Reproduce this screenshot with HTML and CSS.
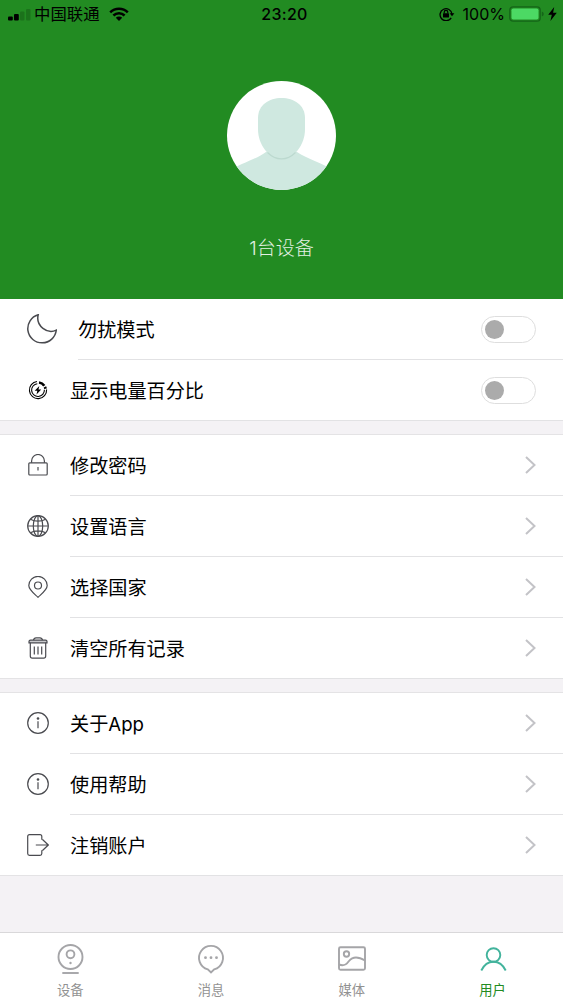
FILE: index.html
```
<!DOCTYPE html>
<html lang="zh-CN">
<head>
    <meta charset="UTF-8">
    <meta name="viewport" content="width=device-width, initial-scale=1.0">
    <title>用户</title>
    <link rel="stylesheet" href="styles.css">
</head>
<body>
    <div class="header">
        <div class="status-bar">
            <div class="status-left">
                <svg class="signal" width="23" height="12" viewBox="0 0 23 12">
                    <rect x="0" y="7.500" width="4.800" height="4" rx="1"/>
                    <rect x="6" y="5" width="4.800" height="6.500" rx="1"/>
                    <rect x="12" y="2.500" width="4.500" height="9" rx="1" opacity=".18"/>
                    <rect x="18" y="0" width="4.500" height="11.500" rx="1" opacity=".18"/>
                </svg>
                <span class="carrier">中国联通</span>
                <svg class="wifi" width="20" height="14" viewBox="0 0 20 14">
                    <path d="M1.2 5.3a12.500 12.500 0 0 1 17.600 0M4.400 8.500a8 8 0 0 1 11.200 0" fill="none" stroke="#000" stroke-width="2.500"/>
                    <path d="M10 14l-3.200-3.200a4.600 4.600 0 0 1 6.400 0z"/>
                </svg>
            </div>
            <div class="status-time">23:20</div>
            <div class="status-right">
                <svg width="16" height="14" viewBox="0 0 16 14">
                    <path d="M12.200 10.800A6 6 0 1 1 13 7" fill="none" stroke="#000" stroke-width="1.300"/>
                    <path d="M10.600 6.200h4.800L13 9.200z"/>
                    <rect x="4" y="6.300" width="6" height="4.200" rx=".6"/>
                    <path d="M5.200 6.500V5.200a1.800 1.800 0 0 1 3.600 0v1.300" fill="none" stroke="#000" stroke-width="1.200"/>
                </svg>
                <span class="percent">100%</span>
                <svg class="battery" width="35" height="16" viewBox="0 0 35 16">
                    <rect x=".8" y=".8" width="30.400" height="14.400" rx="3.200" fill="none" stroke="#156519" stroke-width="1.300"/>
                    <rect x="2.500" y="2.500" width="27" height="11" rx="1.800" fill="#4cd964"/>
                    <path d="M32.800 5.500q2 .8 2 2.500t-2 2.500z" fill="#156519"/>
                </svg>
                <svg class="bolt" width="9" height="14" viewBox="0 0 9 14">
                    <path d="M6.200 0L.2 7.800h3.600L2.400 14l6.400-8.200H5.100z"/>
                </svg>
            </div>
        </div>
        <svg class="avatar" width="109" height="109" viewBox="0 0 109 109">
            <clipPath id="circle"><circle cx="54.5" cy="54.5" r="54.5"/></clipPath>
            <g clip-path="url(#circle)">
                <rect width="109" height="109" fill="#fff"/>
                <path d="M0 91C14 82 30 78 39 71h31c10 7 26 11 39 20v20H0z" fill="#cfe8e0"/>
                <path d="M31 37C31 24 42 17 54.500 17S78 24 78 37v11c0 16-11 30-23.500 30S31 64 31 48z" fill="#cfe8e0"/>
                <path d="M40.500 71.500c8.500 8.500 19.500 8.500 28 0" fill="none" stroke="#bcd9cf" stroke-width="1.200"/>
            </g>
        </svg>
        <div class="device-count">1台设备</div>
    </div>

    <div class="group">
        <div class="row row-wide">
            <svg class="icon" width="30" height="30" viewBox="0 0 30 30">
                <path d="M11.200 .8A14.300 14.300 0 1 0 29.300 16.100C20.500 20.500 8.500 12 11.200 .8z" stroke-width="1.500"/>
            </svg>
            <div class="cell"><span>勿扰模式</span><div class="switch"></div></div>
        </div>
        <div class="row">
            <svg class="icon icon-black" width="22" height="22" viewBox="0 0 22 22">
                <path d="M10 2.500A8.600 8.600 0 1 0 19.600 10.500M10.300 4.700A6.400 6.400 0 1 0 17.400 10.800" stroke-width="1.100"/>
                <path d="M12 3.500a7.700 7.700 0 0 1 5.300 3.200M17.900 7.900a7 7 0 0 1 .6 1.900" stroke-width="2.700"/>
                <path d="M12.300 7l-4.600 4.700h2.600l-.8 3.700 4.700-5h-2.700z" fill="#000" stroke="none"/>
            </svg>
            <div class="cell"><span>显示电量百分比</span><div class="switch"></div></div>
        </div>
    </div>

    <div class="group">
        <div class="row">
            <svg class="icon" width="22" height="22" viewBox="0 0 22 22">
                <rect x="1.800" y="8.800" width="18.400" height="12.200" rx="1"/>
                <path d="M4.600 8.800V6.900a6.400 6.400 0 0 1 12.800 0v1.900M11 13v3.500"/>
            </svg>
            <div class="cell"><span>修改密码</span><svg class="arrow" width="11" height="18" viewBox="0 0 11 18"><path d="M1 1l8.500 8L1 17"/></svg></div>
        </div>
        <div class="row">
            <svg class="icon" width="22" height="22" viewBox="0 0 22 22">
                <circle cx="11" cy="11" r="10.300"/>
                <ellipse cx="11" cy="11" rx="4.700" ry="10.300"/>
                <path d="M.7 11h20.600M11 .7v20.600M3.500 4.200c4 2.600 11 2.600 15 0M3.500 17.800c4-2.600 11-2.600 15 0"/>
            </svg>
            <div class="cell"><span>设置语言</span><svg class="arrow" width="11" height="18" viewBox="0 0 11 18"><path d="M1 1l8.500 8L1 17"/></svg></div>
        </div>
        <div class="row">
            <svg class="icon" width="22" height="22" viewBox="0 0 22 22">
                <path d="M11 21.300C7.500 18 1.800 14 1.800 9.600a9.200 9.200 0 0 1 18.400 0c0 4.400-5.700 8.400-9.200 11.700z"/>
                <circle cx="11" cy="9.500" r="3.500"/>
            </svg>
            <div class="cell"><span>选择国家</span><svg class="arrow" width="11" height="18" viewBox="0 0 11 18"><path d="M1 1l8.500 8L1 17"/></svg></div>
        </div>
        <div class="row">
            <svg class="icon" width="22" height="22" viewBox="0 0 22 22">
                <path d="M2 5.800V4.500Q2 3.200 3.500 3.200h15q1.500 0 1.500 1.300v1.300z" fill="#c8c9cc"/>
                <path d="M6.500 3.200Q7 .8 9 .8h4q2 0 2.500 2.400M3.300 5.800V19q0 2.200 2 2.200h11.400q2 0 2-2.200V5.800M7.300 9.500v8M11 9.500v8M14.700 9.500v8"/>
            </svg>
            <div class="cell"><span>清空所有记录</span><svg class="arrow" width="11" height="18" viewBox="0 0 11 18"><path d="M1 1l8.500 8L1 17"/></svg></div>
        </div>
    </div>

    <div class="group">
        <div class="row">
            <svg class="icon" width="22" height="22" viewBox="0 0 22 22">
                <circle cx="11" cy="11" r="10.300"/>
                <path d="M11 9.300v6.900"/><circle class="dot" cx="11" cy="6.500" r="1.300"/>
            </svg>
            <div class="cell"><span>关于<span class="latin">App</span></span><svg class="arrow" width="11" height="18" viewBox="0 0 11 18"><path d="M1 1l8.500 8L1 17"/></svg></div>
        </div>
        <div class="row">
            <svg class="icon" width="22" height="22" viewBox="0 0 22 22">
                <circle cx="11" cy="11" r="10.300"/>
                <path d="M11 9.300v6.900"/><circle class="dot" cx="11" cy="6.500" r="1.300"/>
            </svg>
            <div class="cell"><span>使用帮助</span><svg class="arrow" width="11" height="18" viewBox="0 0 11 18"><path d="M1 1l8.500 8L1 17"/></svg></div>
        </div>
        <div class="row">
            <svg class="icon" width="22" height="22" viewBox="0 0 22 22">
                <path d="M14.800 5.800V2.500Q14.800.7 13 .7H2.500Q.7.700.7 2.500v17q0 1.800 1.800 1.800H13q1.800 0 1.800-1.800v-3.300M8.800 11h12.500M15.500 5.500l5.800 5.500-5.800 5.500"/>
            </svg>
            <div class="cell"><span>注销账户</span><svg class="arrow" width="11" height="18" viewBox="0 0 11 18"><path d="M1 1l8.500 8L1 17"/></svg></div>
        </div>
    </div>

    <div class="tab-bar">
        <div class="tab">
            <svg width="30" height="32" viewBox="0 0 30 32">
                <circle cx="15.500" cy="14" r="12"/>
                <circle cx="15.500" cy="11.300" r="3.900"/>
                <circle class="tab-dot" cx="15.500" cy="20" r="1.200"/>
                <path d="M7.300 30h16.400"/>
            </svg>
            <span>设备</span>
        </div>
        <div class="tab">
            <svg width="30" height="32" viewBox="0 0 30 32">
                <path d="M11.800 26.400a12 12 0 1 1 6.400 0L15 29.500z"/>
                <circle class="tab-dot" cx="9.500" cy="14.700" r="1.400"/>
                <circle class="tab-dot" cx="15" cy="14.700" r="1.400"/>
                <circle class="tab-dot" cx="20.500" cy="14.700" r="1.400"/>
            </svg>
            <span>消息</span>
        </div>
        <div class="tab">
            <svg width="30" height="32" viewBox="0 0 30 32">
                <rect x="2" y="4.300" width="26" height="22.400" rx="1.500"/>
                <circle cx="9.500" cy="11" r="2.700"/>
                <path d="M2 21.500c5 2 7.500 0 10-3.500 4-5 10-4 16-.5"/>
            </svg>
            <span>媒体</span>
        </div>
        <div class="tab active">
            <svg width="30" height="32" viewBox="0 0 30 32">
                <circle cx="15.500" cy="12" r="6.800"/>
                <path d="M3.300 27.500C6 22 10 18.800 15.500 18.800s9.500 3.200 12.200 8.700"/>
            </svg>
            <span>用户</span>
        </div>
    </div>
</body>
</html>
```
FILE: styles.css
```
* {
    box-sizing: border-box;
}
body {
    margin: 0;
    height: 1000px;
    display: flex;
    flex-direction: column;
    background-color: #f4f2f5;
    color: #000;
    font-family: Inter, "Noto Sans CJK SC", sans-serif;
}
svg {
    display: block;
    flex-shrink: 0;
}
.header {
    height: 299px;
    display: flex;
    flex-direction: column;
    align-items: center;
    background-color: #228b22;
}
.status-bar {
    width: 100%;
    height: 28px;
    padding: 0 6px 0 8px;
    display: grid;
    grid-template-columns: 1fr auto 1fr;
    align-items: center;
    font-size: 16px;
    line-height: 28px;
}
.status-left, .status-right {
    display: flex;
    align-items: center;
}
.status-right {
    justify-content: flex-end;
}
.signal {
    margin-top: 2px;
}
.carrier {
    margin: 0 9px 0 3px;
    font-size: 16.4px;
}
.status-time {
    padding-left: 4px;
    font-weight: 500;
    letter-spacing: 0.3px;
}
.percent {
    margin: 0 4px 0 8px;
}
.bolt {
    margin-left: 4px;
}
.avatar {
    margin-top: 53px;
}
.device-count {
    margin-top: 45px;
    font-size: 19px;
    line-height: 28px;
    font-weight: 300;
    color: #e2f0e2;
}
.group {
    margin-bottom: 14px;
    background-color: #fff;
    box-shadow: 0 -1px #e4e3e5, inset 0 -1px #e4e3e5;
}
.header + .group {
    box-shadow: inset 0 -1px #e4e3e5;
}
.row {
    height: 61px;
    padding-left: 27px;
    display: flex;
    align-items: center;
    gap: 21px;
}
.icon {
    margin-bottom: 2px;
    fill: none;
    stroke: #4a4b50;
    stroke-width: 1.2;
}
.icon-black {
    stroke: #000;
}
.icon .dot {
    fill: #4a4b50;
    stroke: none;
}
.cell {
    flex: 1;
    height: 61px;
    padding-right: 27px;
    display: flex;
    align-items: center;
    justify-content: space-between;
    border-bottom: 1px solid #e2e2e4;
    font-size: 19.15px;
}
.latin {
    font-size: 18.6px;
}
.switch {
    width: 55px;
    height: 27px;
    padding: 3px;
    border: 1px solid #dedede;
    border-radius: 14px;
}
.switch::before {
    content: "";
    display: block;
    width: 19px;
    height: 19px;
    border-radius: 50%;
    background-color: #ababab;
}
.arrow {
    fill: none;
    stroke: #c3c3c7;
    stroke-width: 2;
}
.tab-bar {
    height: 68px;
    margin-top: auto;
    display: flex;
    border-top: 1px solid #d9d8da;
    background-color: #fff;
}
.tab {
    flex: 1;
    padding-top: 10px;
    display: flex;
    flex-direction: column;
    align-items: center;
    font-size: 13.3px;
    line-height: 20px;
    color: #929292;
}
.tab svg {
    margin-bottom: 5px;
    fill: none;
    stroke: #a5a5a8;
    stroke-width: 1.9;
}
.tab .tab-dot {
    fill: #a5a5a8;
    stroke: none;
}
.tab.active {
    color: #228b22;
}
.tab.active svg {
    stroke: #42b39c;
}
```
